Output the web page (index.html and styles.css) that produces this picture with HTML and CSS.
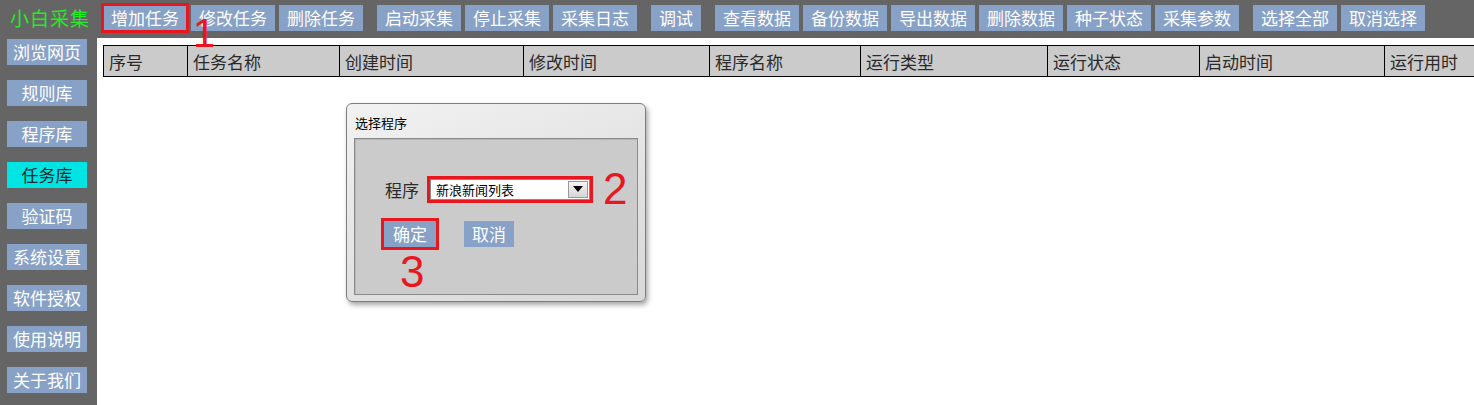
FILE: index.html
```html
<!DOCTYPE html>
<html lang="zh-CN">
<head>
<meta charset="utf-8">
<title>小白采集</title>
<link rel="stylesheet" href="styles.css">
</head>
<body>
<div class="app">
  <header class="topbar">
    <div class="logo">小白采集</div>
    <nav class="toolbar">
      <div class="group">
        <div class="btn btn-marked">增加任务</div>
        <div class="btn">修改任务</div>
        <div class="btn">删除任务</div>
      </div>
      <div class="group">
        <div class="btn">启动采集</div>
        <div class="btn">停止采集</div>
        <div class="btn">采集日志</div>
      </div>
      <div class="group">
        <div class="btn btn-short">调试</div>
      </div>
      <div class="group">
        <div class="btn">查看数据</div>
        <div class="btn">备份数据</div>
        <div class="btn">导出数据</div>
        <div class="btn">删除数据</div>
        <div class="btn">种子状态</div>
        <div class="btn">采集参数</div>
      </div>
      <div class="group">
        <div class="btn">选择全部</div>
        <div class="btn">取消选择</div>
      </div>
    </nav>
    <span class="mark mark-1">1</span>
  </header>
  <div class="main">
    <aside class="sidebar">
      <div class="side-btn">浏览网页</div>
      <div class="side-btn">规则库</div>
      <div class="side-btn">程序库</div>
      <div class="side-btn active">任务库</div>
      <div class="side-btn">验证码</div>
      <div class="side-btn">系统设置</div>
      <div class="side-btn">软件授权</div>
      <div class="side-btn">使用说明</div>
      <div class="side-btn">关于我们</div>
    </aside>
    <section class="content">
      <table class="grid">
        <thead>
          <tr>
            <th class="c1">序号</th>
            <th class="c2">任务名称</th>
            <th class="c3">创建时间</th>
            <th class="c4">修改时间</th>
            <th class="c5">程序名称</th>
            <th class="c6">运行类型</th>
            <th class="c7">运行状态</th>
            <th class="c8">启动时间</th>
            <th class="c9">运行用时</th>
          </tr>
        </thead>
      </table>
      <div class="dialog">
        <div class="dialog-title">选择程序</div>
        <div class="dialog-body">
          <div class="row row-select">
            <span class="label">程序</span>
            <div class="select-mark">
              <div class="select">
                <span class="select-text">新浪新闻列表</span>
                <span class="select-arrow">
                  <svg width="10" height="6" viewBox="0 0 10 6"><path d="M0 0 H10 L5 6 Z" fill="#000"/></svg>
                </span>
              </div>
            </div>
            <span class="mark mark-2">2</span>
          </div>
          <div class="row row-buttons">
            <div class="btn dlg-btn btn-ok">确定</div>
            <div class="btn dlg-btn btn-cancel">取消</div>
          </div>
          <div class="mark mark-3">3</div>
        </div>
      </div>
    </section>
  </div>
</div>
</body>
</html>
```

FILE: styles.css
```css
* {
  box-sizing: border-box;
}

html, body {
  margin: 0;
  padding: 0;
  height: 405px;
  overflow: hidden;
}

body {
  background: #656565;
  font-family: "Noto Sans CJK SC", "Noto Sans", sans-serif;
  font-size: 17px;
}

.app {
  display: flex;
  flex-direction: column;
  height: 405px;
}

/* ---------- top bar ---------- */
.topbar {
  position: relative;
  z-index: 2;
  display: flex;
  align-items: flex-start;
  height: 38px;
  padding-top: 5px;
  flex: none;
}

.logo {
  width: 103px;
  padding-left: 10px;
  height: 26px;
  line-height: 26px;
  color: #26ea26;
  font-size: 19px;
  letter-spacing: 1px;
  white-space: nowrap;
}

.toolbar {
  display: flex;
  gap: 14px;
}

.group {
  display: flex;
  gap: 4px;
}

.btn {
  height: 26px;
  line-height: 26px;
  padding: 0 8px;
  background: #87a1c7;
  color: #ffffff;
  font-size: 17px;
  white-space: nowrap;
}

.btn-short {
  width: 50px;
  padding: 0;
  text-align: center;
}

.btn-marked {
  outline: 3px solid #e8161e;
  outline-offset: -1px;
}

.mark {
  font-family: "Liberation Sans", Arial, sans-serif;
  color: #e8161e;
  line-height: 1;
}

.mark-1 {
  position: absolute;
  left: 193px;
  top: 13px;
  font-size: 40px;
  z-index: 10;
}

/* ---------- main ---------- */
.main {
  display: flex;
  flex: 1;
  min-height: 0;
}

.sidebar {
  width: 97px;
  flex: none;
  display: flex;
  flex-direction: column;
  gap: 15px;
  padding: 1px 0 0 7px;
}

.side-btn {
  width: 80px;
  height: 26px;
  line-height: 26px;
  text-align: center;
  background: #87a1c7;
  color: #ffffff;
  font-size: 17px;
  white-space: nowrap;
}

.side-btn.active {
  background: #00e4e4;
  color: #1a2a2a;
}

.content {
  position: relative;
  flex: 1;
  background: #ffffff;
  padding: 7px 0 0 6px;
  overflow: hidden;
}

/* ---------- table ---------- */
.grid {
  border-collapse: collapse;
  table-layout: fixed;
  width: 1431px;
}

.grid th {
  height: 31px;
  padding: 0 0 0 5px;
  background: #cbcbcb;
  border: 1px solid #000;
  color: #2a2a2a;
  font-size: 17px;
  font-weight: normal;
  text-align: left;
  white-space: nowrap;
}

.grid .c1 { width: 84px; }
.grid .c2 { width: 152px; }
.grid .c3 { width: 184px; }
.grid .c4 { width: 186px; }
.grid .c5 { width: 151px; }
.grid .c6 { width: 187px; }
.grid .c7 { width: 152px; }
.grid .c8 { width: 185px; }
.grid .c9 { width: 150px; }

/* ---------- dialog ---------- */
.dialog {
  position: absolute;
  left: 249px;
  top: 65px;
  width: 300px;
  height: 199px;
  display: flex;
  flex-direction: column;
  padding: 0 7px 6px 7px;
  border: 1px solid #7d7d7d;
  border-radius: 6px;
  background: linear-gradient(160deg, #f2f2f2 0%, #e2e2e2 55%, #d8d8d8 100%);
  box-shadow: 2px 3px 5px rgba(0, 0, 0, 0.35);
}

.dialog-title {
  height: 34px;
  padding: 11px 0 0 1px;
  line-height: 15px;
  font-size: 13px;
  color: #000;
}

.dialog-body {
  flex: 1;
  background: #cbcbcb;
  border: 1px solid #8a8a8a;
  box-shadow: inset 1px 1px 0 #b5b5b5;
  padding-top: 28px;
}

.row {
  display: flex;
  align-items: center;
}

.row-select .label {
  margin-left: 30px;
  font-size: 17px;
  color: #2a2a2a;
}

.select-mark {
  margin-left: 8px;
  border: 3px solid #e8161e;
  padding: 0;
}

.select {
  width: 160px;
  height: 21px;
  display: flex;
  align-items: center;
  justify-content: space-between;
  background: #ffffff;
  border: 1px solid #8a8a8a;
  padding: 0 1px 0 5px;
}

.select-text {
  font-size: 13px;
  color: #000;
  white-space: nowrap;
}

.select-arrow {
  width: 20px;
  height: 17px;
  display: flex;
  align-items: center;
  justify-content: center;
  border: 1px solid #9a9a9a;
  background: linear-gradient(#f4f4f4, #d6d6d6);
}

.mark-2 {
  margin-left: 10px;
  font-size: 44px;
}

.row-buttons {
  margin-top: 10px;
  padding-left: 29px;
}

.dlg-btn {
  width: 52px;
  padding: 0;
  text-align: center;
}

.btn-ok {
  outline: 3px solid #e8161e;
}

.btn-cancel {
  margin-left: 28px;
  width: 50px;
}

.mark-3 {
  margin: 3px 0 0 45px;
  font-size: 44px;
}
```
